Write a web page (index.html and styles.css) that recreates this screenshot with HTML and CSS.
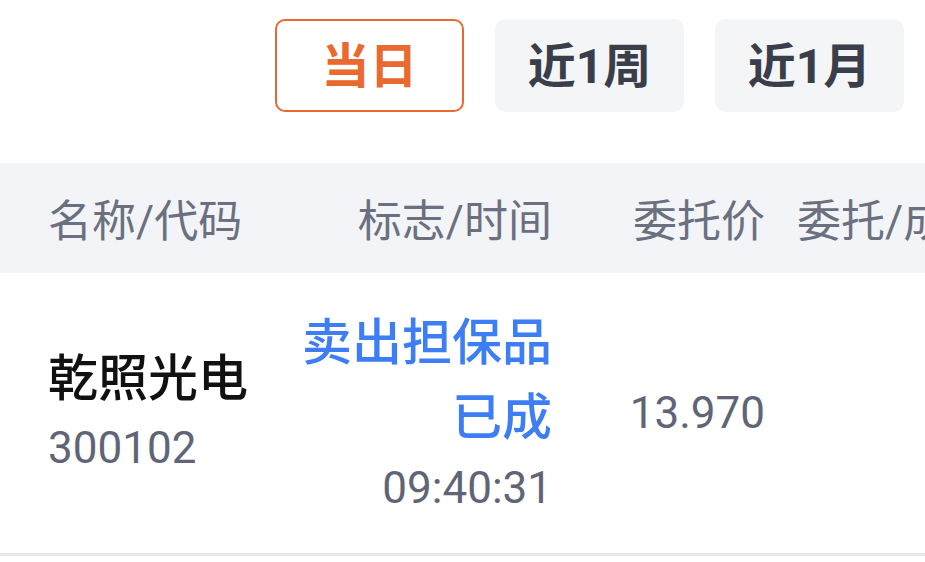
FILE: index.html
```html
<!DOCTYPE html>
<html lang="zh-CN">
<head>
<meta charset="utf-8">
<title>委托查询</title>
<link rel="stylesheet" href="styles.css">
</head>
<body>
  <div class="tabs">
    <div class="tab tab-active">当日</div>
    <div class="tab">近1周</div>
    <div class="tab">近1月</div>
  </div>
  <div class="grid head">
    <div class="c1">名称/代码</div>
    <div class="c2">标志/时间</div>
    <div class="c3">委托价</div>
    <div class="c4">委托/成交</div>
  </div>
  <div class="grid row">
    <div class="c1">
      <div class="name">乾照光电</div>
      <div class="code">300102</div>
    </div>
    <div class="c2">
      <div class="flag">卖出担保品<br>已成</div>
      <div class="time">09:40:31</div>
    </div>
    <div class="c3 price">13.970</div>
    <div class="c4"></div>
  </div>
</body>
</html>
```
FILE: styles.css
```css
html, body {
  margin: 0;
  padding: 0;
  background: #ffffff;
}
body {
  width: 925px;
  height: 562px;
  overflow: hidden;
  font-family: "Roboto", "Noto Sans CJK SC", sans-serif;
}
.tabs {
  display: flex;
  justify-content: flex-end;
  gap: 31px;
  padding: 19px 21px 0 0;
}
.tab {
  box-sizing: border-box;
  width: 189px;
  height: 93px;
  padding-bottom: 8px;
  border-radius: 10px;
  background: #f4f5f7;
  color: #3a3e4a;
  font-size: 48px;
  font-weight: 700;
  display: flex;
  align-items: center;
  justify-content: center;
}
.tab-active {
  background: #ffffff;
  border: 2px solid #e9692f;
  color: #e9692f;
}
.grid {
  display: grid;
  grid-template-columns: 232px 272px 213px 1fr;
  padding-left: 48px;
  align-items: center;
}
.head {
  margin-top: 51px;
  height: 110px;
  background: #f2f4f7;
  color: #6b7080;
  font-size: 44px;
  font-weight: 400;
  white-space: nowrap;
}
.c2, .c3 {
  text-align: right;
}
.c4 {
  padding-left: 32px;
  overflow: hidden;
  white-space: nowrap;
}
.row {
  height: 280px;
  border-bottom: 3px solid #e6e7eb;
}
.name {
  font-size: 50px;
  line-height: 70px;
  font-weight: 500;
  color: #111111;
}
.code {
  font-size: 44px;
  line-height: 68px;
  color: #5f6577;
}
.flag {
  font-size: 50px;
  line-height: 75px;
  font-weight: 500;
  color: #3e7ef4;
}
.time {
  font-size: 44px;
  line-height: 64px;
  color: #5f6577;
}
.price {
  font-size: 44px;
  color: #5f6577;
}
```
